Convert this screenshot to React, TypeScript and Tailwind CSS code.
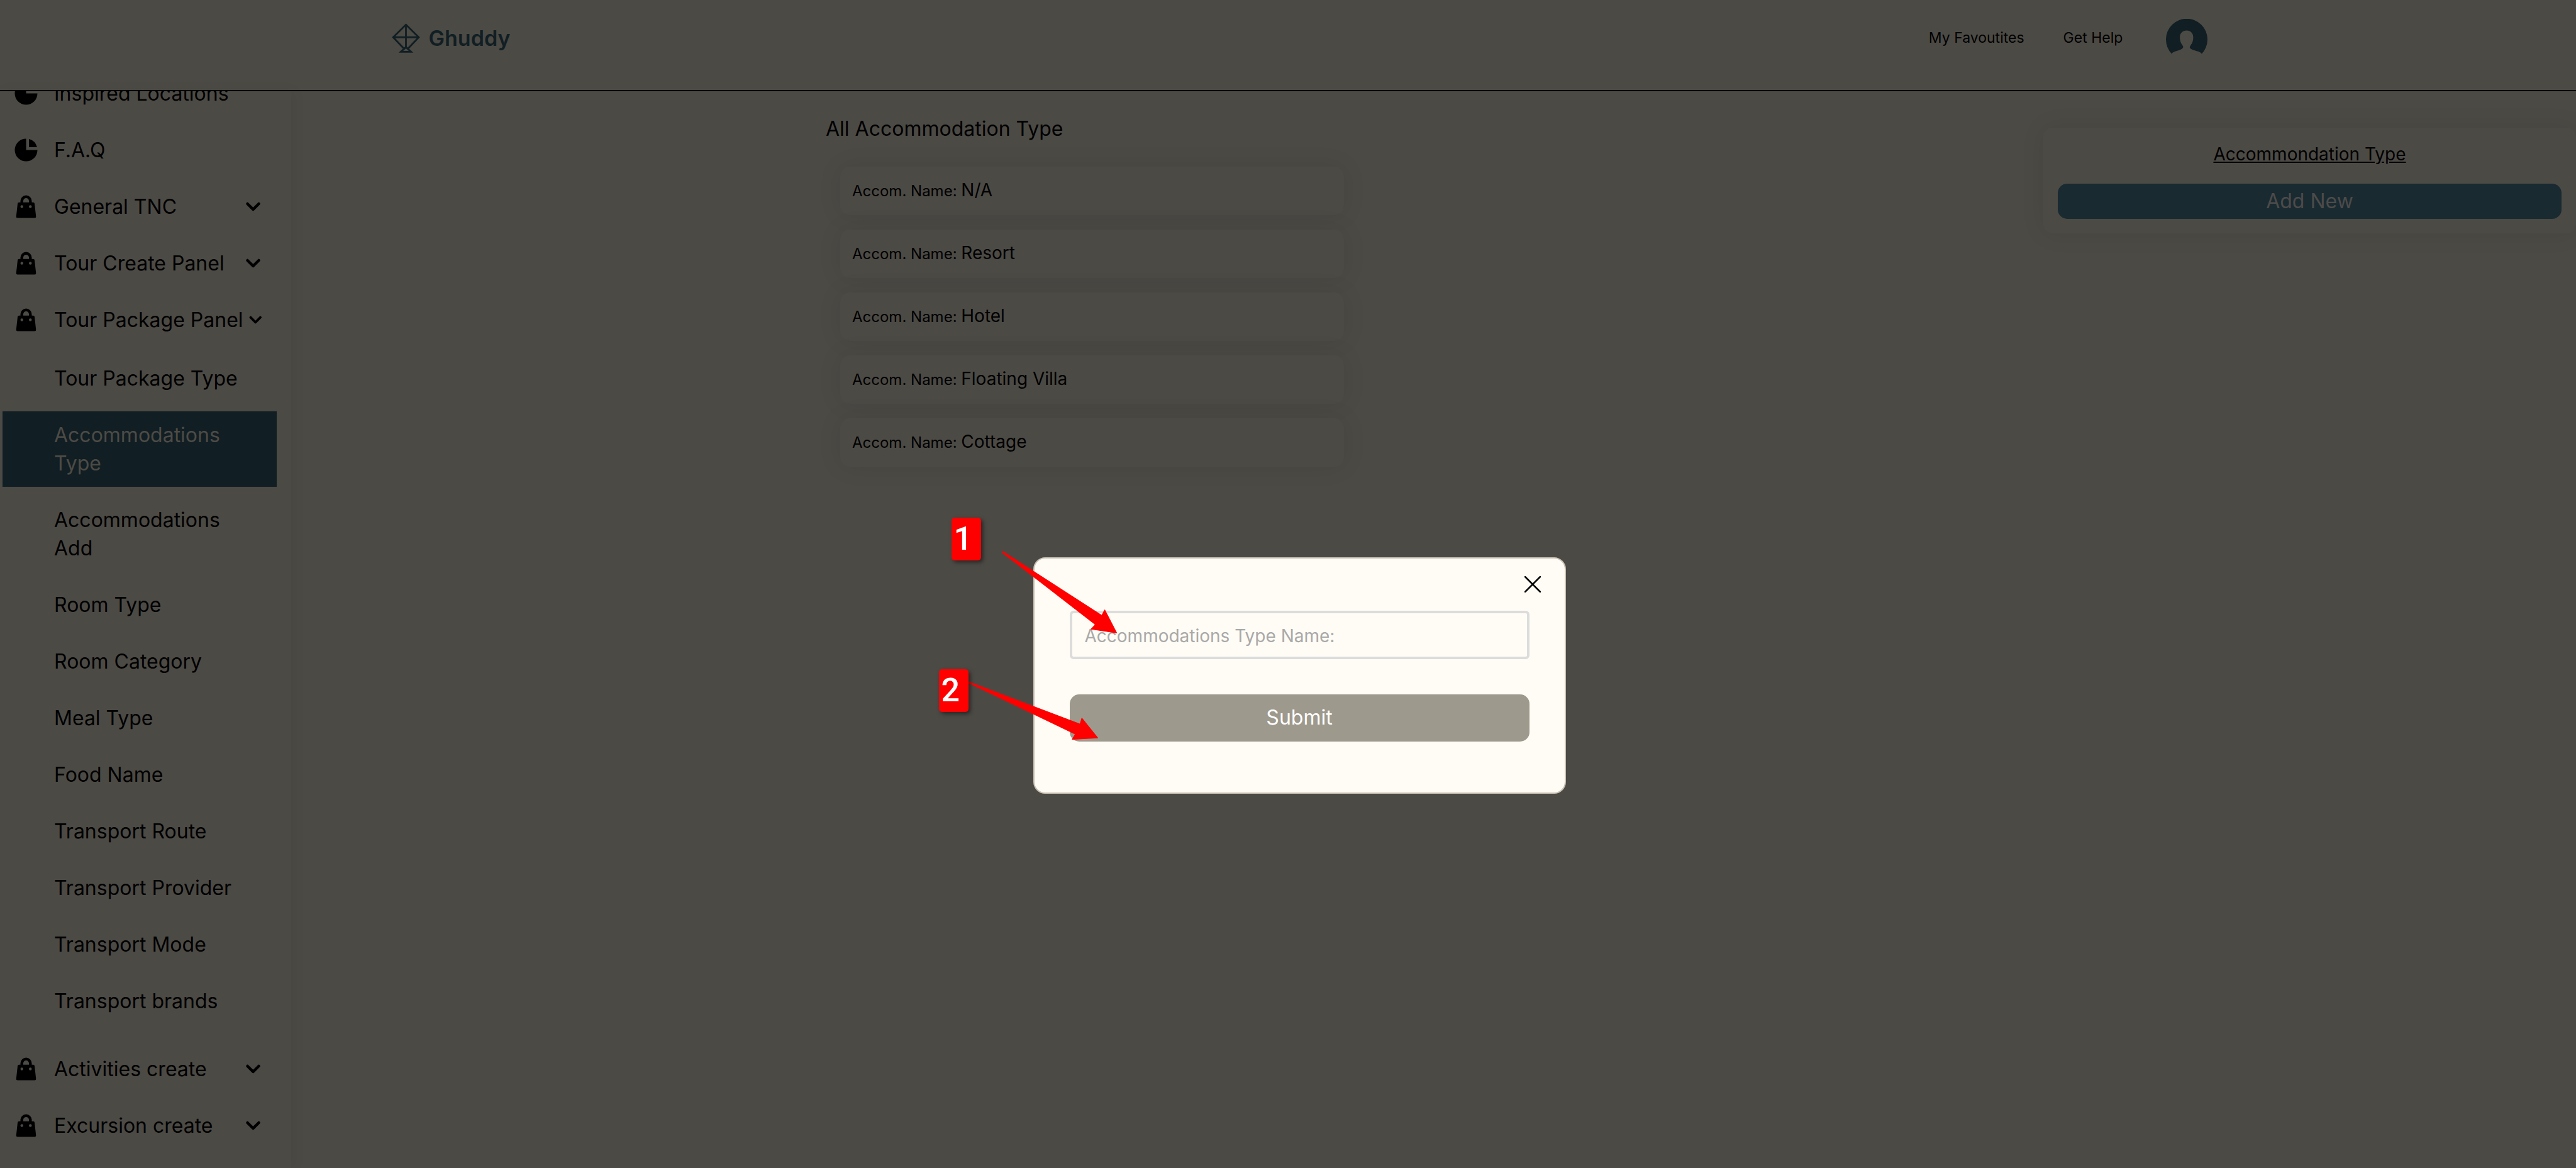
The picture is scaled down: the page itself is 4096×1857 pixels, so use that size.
import { HiChartPie, HiChevronDown, HiShoppingBag } from "react-icons/hi";

type Entry = { label: string; icon: "pie" | "bag"; expandable?: boolean };

const topEntries: Entry[] = [
  { label: "Inspired Locations", icon: "pie" },
  { label: "F.A.Q", icon: "pie" },
  { label: "General TNC", icon: "bag", expandable: true },
  { label: "Tour Create Panel", icon: "bag", expandable: true },
  { label: "Tour Package Panel", icon: "bag", expandable: true },
];

const packageEntries = [
  "Tour Package Type",
  "Accommodations Type",
  "Accommodations Add",
  "Room Type",
  "Room Category",
  "Meal Type",
  "Food Name",
  "Transport Route",
  "Transport Provider",
  "Transport Mode",
  "Transport brands",
];

const bottomEntries: Entry[] = [
  { label: "Activities create", icon: "bag", expandable: true },
  { label: "Excursion create", icon: "bag", expandable: true },
];

const accommodations = ["N/A", "Resort", "Hotel", "Floating Villa", "Cottage"];

function KiteLogo() {
  return (
    <svg viewBox="0 0 144 150" className="h-[47px] w-[45px]" fill="none" stroke="currentColor" strokeWidth="9" aria-hidden="true">
      <path d="M60 127 L7 71 L72 7 L137 71 L84 127" />
      <path d="M72 7 V118 M7 71 H137" />
      <path d="M72 121 L46 145 H98 Z" />
    </svg>
  );
}

function Avatar() {
  return (
    <svg viewBox="0 0 70 70" className="size-[66px]" fill="currentColor" aria-hidden="true">
      <path d="M9.8 59 A35 35 0 1 1 60.2 59 C59 54 44 54 40.5 49 C39.5 47.5 41 46 42 44 C45 40 46 36 46 31 C46 24 41.5 19.5 35 19.5 C28 19.5 23.5 24 23.5 31 C23.5 36 24.5 40 27.5 44 C29 46 29.5 47.5 28.5 49 C25 54 11 54 9.8 59 Z" />
    </svg>
  );
}

function NavRow({ label, icon, expandable }: Entry) {
  const Icon = icon === "pie" ? HiChartPie : HiShoppingBag;
  return (
    <li>
      <button type="button" className="flex w-full items-center p-[15px] text-left">
        <Icon className="size-[45px] shrink-0" />
        <span className="ml-[22px] flex-1 whitespace-nowrap">{label}</span>
        {expandable && <HiChevronDown className="h-[45px] w-[45px] min-w-0" />}
      </button>
    </li>
  );
}

function Sidebar() {
  return (
    <nav className="w-[463px] shrink-0 overflow-hidden pr-[23px] pl-1 text-[32px] leading-[45px] shadow-[4px_0_20px_#0000000d]">
      <ul className="-mt-[34px] flex flex-col gap-[15px]">
        {topEntries.map((e) => (
          <NavRow key={e.label} {...e} />
        ))}
        <li>
          <ul className="mt-[3px] mb-[18px] flex flex-col gap-[15px]">
            {packageEntries.map((label) => (
              <li key={label}>
                <a
                  href="#"
                  className={
                    label === "Accommodations Type"
                      ? "block bg-[#111e23] py-[15px] pr-[45px] pl-[82px] text-[#4d4b46]"
                      : "block py-[15px] pr-[45px] pl-[82px]"
                  }
                >
                  {label}
                </a>
              </li>
            ))}
          </ul>
        </li>
        {bottomEntries.map((e) => (
          <NavRow key={e.label} {...e} />
        ))}
      </ul>
    </nav>
  );
}

function Callout({ n, className }: { n: number; className: string }) {
  return (
    <span
      className={`absolute flex h-[68px] w-[47px] items-center rounded-[5px] bg-[#ff0000] pl-1 font-['Roboto',sans-serif] text-[52px] leading-[68px] font-medium text-white shadow-[3px_3px_6px_#00000080] ${className}`}
    >
      {n}
    </span>
  );
}

function Arrows() {
  return (
    <svg
      viewBox="0 0 1200 1320"
      className="pointer-events-none absolute -top-[97px] -left-[177px] h-[414px] w-[376px]"
      fill="#ff0000"
      stroke="#ff0000"
      strokeWidth="4"
      strokeLinejoin="round"
      aria-hidden="true"
    >
      <path d="M403 273 L906 598 L921 570 L981 686 L852 667 L874 644 L401 278 Z" />
      <path d="M230 935 L796 1149 L805 1119 L885 1219 L757 1226 L772 1200 L230 939 Z" />
    </svg>
  );
}

function Modal() {
  return (
    <div className="fixed inset-0 flex items-center justify-center pt-[290px] pl-[36px]">
      <div role="dialog" aria-label="Add accommodation type" className="relative w-[847px] rounded-[19px] border-2 border-[#c9c1b3] bg-[#fffcf5] px-[56px] pt-[83px] pb-[81px]">
        <button type="button" aria-label="Close" className="absolute top-[28px] right-[38px]">
          <svg viewBox="0 0 26 26" className="size-[26px]" stroke="black" strokeWidth="2.5" strokeLinecap="round" aria-hidden="true">
            <path d="M1 1 L25 25 M25 1 L1 25" />
          </svg>
        </button>
        <form className="flex flex-col gap-[56px]">
          <input
            type="text"
            aria-label="Accommodations Type Name"
            placeholder="Accommodations Type Name:"
            className="h-[77px] w-full rounded-[6px] border-4 border-[#dcdcdc] bg-transparent px-[20px] pt-1 text-[28px] placeholder:text-[#a9a9a9]"
          />
          <button type="button" className="h-[75px] w-full rounded-[15px] bg-[#9e998d] text-[32px] text-white">
            Submit
          </button>
        </form>
        <Arrows />
        <Callout n={1} className="-top-[65px] -left-[132px]" />
        <Callout n={2} className="top-[176px] -left-[152px]" />
      </div>
    </div>
  );
}

export default function App() {
  return (
    <div className="flex h-screen flex-col overflow-hidden bg-[#4c4a45] font-['Inter',sans-serif] text-black">
      <header className="flex h-[145px] shrink-0 items-start justify-between border-b-2 border-black pt-[30px] pr-[14.3%] pl-[15.2%]">
        <a href="#" className="mt-[7px] flex items-center gap-[14px] text-[34px] leading-[47px] font-semibold text-[#111e23]">
          <KiteLogo />
          Ghuddy
        </a>
        <div className="flex items-start text-[23px] leading-[60px]">
          <a href="#">My Favoutites</a>
          <a href="#" className="ml-[62px]">Get Help</a>
          <button type="button" aria-label="Account" className="ml-[69px] text-[#111e23]">
            <Avatar />
          </button>
        </div>
      </header>
      <div className="flex min-h-0 flex-1">
        <Sidebar />
        <main className="grid flex-1 grid-cols-[850fr_847fr_1089fr_847fr] items-start">
          <section className="col-start-2 pt-[36px]">
            <h1 className="text-[32px] leading-[48px]">All Accommodation Type</h1>
            <ul className="flex flex-col gap-[23px] px-[23px] pt-9">
              {accommodations.map((name) => (
                <li key={name} className="flex h-[77px] items-center rounded-[15px] bg-[#4c4a45] px-[19px] pb-1 shadow-[0_0_38px_#00000014]">
                  <p className="text-[24px]">
                    Accom. Name: <span className="text-[28px]">{name}</span>
                  </p>
                </li>
              ))}
            </ul>
          </section>
          <aside className="col-start-4 mt-[58px] rounded-[15px] px-[23px] pt-[22px] pb-[23px] text-center shadow-[0_0_38px_#00000014]">
            <h2 className="text-[28px] leading-[40px] underline">Accommondation Type</h2>
            <button type="button" className="mt-[27px] h-[56px] w-full rounded-[15px] bg-[#192a31] text-[32px] text-[#4d4b4a]">
              Add New
            </button>
          </aside>
        </main>
      </div>
      <Modal />
    </div>
  );
}
